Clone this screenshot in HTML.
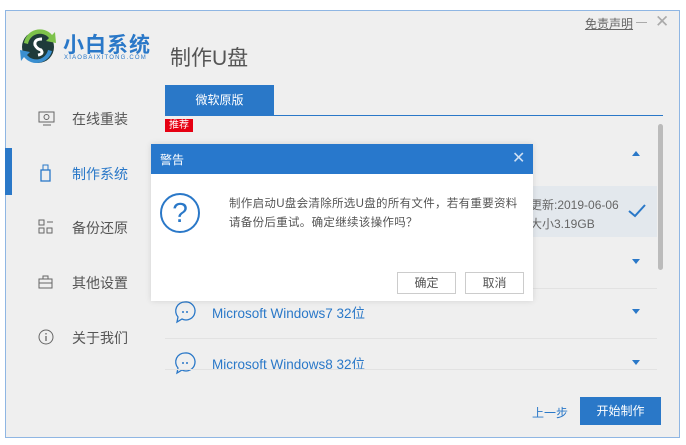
<!DOCTYPE html>
<html><head><meta charset="utf-8"><style>
*{margin:0;padding:0;box-sizing:border-box}
body{width:686px;height:445px;background:#fff;position:relative;overflow:hidden;font-family:"Liberation Sans","Noto Sans CJK SC",sans-serif;color:#555}
.a{position:absolute}
.win{left:5px;top:10px;width:675px;height:428px;background:#efefef;border:1px solid #8fb6e3}
.menu{font-size:14px;color:#555;left:72px}
.tri{width:0;height:0;border-left:4px solid transparent;border-right:4px solid transparent}
.line{height:1px;background:#e2e2e2}
.ms{font-size:13.5px;color:#2a78c8}
</style></head><body>
<div class="a win"></div>
<svg class="a" style="left:20px;top:27px" width="40" height="40" viewBox="0 0 40 40">
<circle cx="18" cy="20" r="16" fill="#1f3b3a"/>
<path d="M4 16 A16 16 0 0 1 32 8 L35 5 L36 16 L26 14 L29 11 A12 12 0 0 0 8 17Z" fill="#7dc24b"/>
<path d="M32 24 A16 16 0 0 1 4 30 L1 34 L0 23 L10 25 L7 28 A12 12 0 0 0 28 23Z" fill="#3a8fd0"/>
<path d="M22 12 Q14 12 15 18 Q17 22 21 23 Q24 27 18 28" stroke="#fff" stroke-width="3" fill="none"/>
</svg>
<div class="a" style="left:63px;top:29px;font-size:21px;color:#2a78c8;font-weight:bold;letter-spacing:1px">小白系统</div>
<div class="a" style="left:64px;top:55px;font-size:6px;color:#2a78c8;letter-spacing:1.2px">XIAOBAIXITONG.COM</div>
<div class="a" style="left:170px;top:42px;font-size:21px;color:#555">制作U盘</div>
<div class="a" style="left:585px;top:15px;font-size:12px;color:#666;text-decoration:underline">免责声明</div>
<div class="a" style="left:636px;top:22px;width:11px;height:1px;background:#aaa"></div>
<div class="a" style="left:655px;top:12px;font-size:17px;color:#aaa">✕</div>
<div class="a" style="left:5px;top:148px;width:7px;height:47px;background:#2a78c8"></div>
<svg class="a" style="left:38px;top:111px" width="18" height="16"><rect x="1" y="1" width="15" height="10" fill="none" stroke="#666"/><circle cx="8.5" cy="6" r="2.5" fill="none" stroke="#666"/><path d="M5 14h8" stroke="#666"/></svg>
<div class="a menu" style="top:109px">在线重装</div>
<svg class="a" style="left:40px;top:164px" width="12" height="18"><rect x="1" y="6" width="9" height="11" fill="none" stroke="#2a78c8" stroke-width="1.3"/><rect x="3" y="1" width="5" height="5" fill="none" stroke="#2a78c8"/></svg>
<div class="a menu" style="top:164px;color:#2a78c8">制作系统</div>
<svg class="a" style="left:38px;top:219px" width="16" height="16"><rect x="1" y="1" width="5" height="5" fill="none" stroke="#666"/><rect x="1" y="9" width="5" height="5" fill="none" stroke="#666"/><rect x="9" y="9" width="5" height="5" fill="none" stroke="#666"/><path d="M9 3h6" stroke="#666"/></svg>
<div class="a menu" style="top:218px">备份还原</div>
<svg class="a" style="left:38px;top:274px" width="16" height="16"><rect x="1" y="5" width="13" height="9" fill="none" stroke="#666"/><path d="M5 5V2h5v3M1 9h13" stroke="#666" fill="none"/></svg>
<div class="a menu" style="top:273px">其他设置</div>
<svg class="a" style="left:38px;top:329px" width="17" height="17"><circle cx="8" cy="8" r="7" fill="none" stroke="#666"/><path d="M8 7v5M8 4v1.5" stroke="#666" stroke-width="1.3"/></svg>
<div class="a menu" style="top:328px">关于我们</div>
<div class="a" style="left:165px;top:85px;width:109px;height:30px;background:#2a78c8;color:#fff;font-size:12px;text-align:center;line-height:30px">微软原版</div>
<div class="a" style="left:165px;top:115px;width:498px;height:1px;background:#2a78c8"></div>
<div class="a" style="left:165px;top:119px;width:28px;height:13px;background:#e60012;color:#fff;font-size:10px;line-height:13px;text-align:center">推荐</div>
<div class="a" style="left:658px;top:124px;width:5px;height:146px;background:#bbb;border-radius:3px"></div>
<div class="a tri" style="left:632px;top:151px;border-bottom:5px solid #2a78c8"></div>
<div class="a" style="left:533px;top:186px;width:124px;height:51px;background:#e3e8ed"></div>
<div class="a" style="left:530px;top:196px;font-size:12px;color:#666">更新:2019-06-06</div>
<div class="a" style="left:530px;top:215px;font-size:12px;color:#666">大小3.19GB</div>
<svg class="a" style="left:627px;top:203px" width="20" height="16"><path d="M2 8l6 5L18 2" stroke="#2a78c8" stroke-width="2" fill="none"/></svg>
<div class="a tri" style="left:632px;top:259px;border-top:5px solid #2a78c8"></div>
<div class="a line" style="left:165px;top:288px;width:492px"></div>
<svg class="a" style="left:173px;top:300px" width="26" height="24"><path d="M12 2a9 9 0 1 1 -3 17l-5 3 1-5a9 9 0 0 1 7-15z" fill="none" stroke="#2a78c8" stroke-width="1.3"/><circle cx="10" cy="12" r="1" fill="#2a78c8"/><circle cx="14" cy="12" r="1" fill="#2a78c8"/></svg>
<div class="a ms" style="left:212px;top:302px">Microsoft Windows7 32位</div>
<div class="a tri" style="left:632px;top:309px;border-top:5px solid #2a78c8"></div>
<div class="a line" style="left:165px;top:338px;width:492px"></div>
<svg class="a" style="left:173px;top:351px" width="26" height="24"><path d="M12 2a9 9 0 1 1 -3 17l-5 3 1-5a9 9 0 0 1 7-15z" fill="none" stroke="#2a78c8" stroke-width="1.3"/><circle cx="10" cy="12" r="1" fill="#2a78c8"/><circle cx="14" cy="12" r="1" fill="#2a78c8"/></svg>
<div class="a ms" style="left:212px;top:353px">Microsoft Windows8 32位</div>
<div class="a tri" style="left:632px;top:360px;border-top:5px solid #2a78c8"></div>
<div class="a line" style="left:165px;top:369px;width:492px"></div>
<div class="a" style="left:532px;top:404px;font-size:12px;color:#2a78c8">上一步</div>
<div class="a" style="left:580px;top:397px;width:81px;height:28px;background:#2a78c8;color:#fff;font-size:12px;text-align:center;line-height:28px">开始制作</div>
<div class="a" style="left:151px;top:144px;width:382px;height:157px;background:#fff;box-shadow:0 0 6px rgba(0,0,0,.12)"></div>
<div class="a" style="left:151px;top:144px;width:382px;height:30px;background:#2878cc"></div>
<div class="a" style="left:160px;top:151px;font-size:12px;color:#fff">警告</div>
<div class="a" style="left:512px;top:148px;font-size:16px;color:#cfe0f3">✕</div>
<div class="a" style="left:160px;top:193px;width:40px;height:40px;border:2px solid #2a78c8;border-radius:50%;color:#2a78c8;font-size:28px;text-align:center;line-height:36px">?</div>
<div class="a" style="left:229px;top:195px;font-size:11.5px;color:#555;line-height:19px;width:300px;letter-spacing:0.3px">制作启动U盘会清除所选U盘的所有文件，若有重要资料<br>请备份后重试。确定继续该操作吗？</div>
<div class="a" style="left:397px;top:272px;width:59px;height:22px;border:1px solid #ccc;font-size:12px;text-align:center;line-height:20px;color:#555">确定</div>
<div class="a" style="left:465px;top:272px;width:59px;height:22px;border:1px solid #ccc;font-size:12px;text-align:center;line-height:20px;color:#555">取消</div>
</body></html>
